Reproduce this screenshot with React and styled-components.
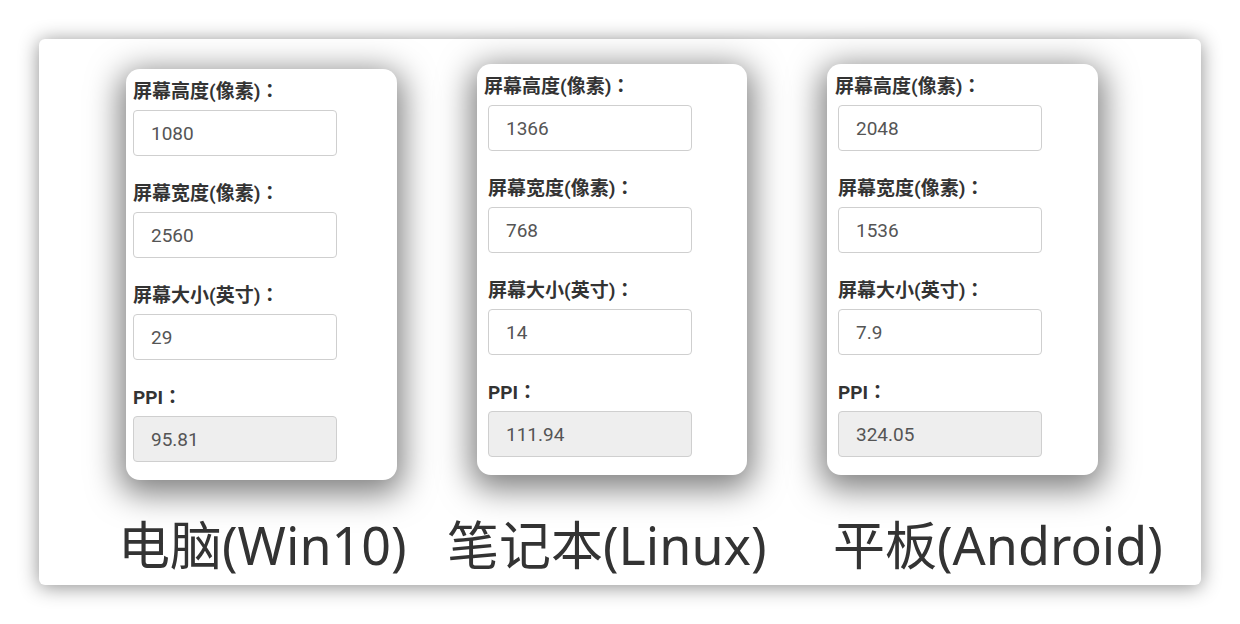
import styled, { createGlobalStyle } from "styled-components";

const GlobalStyle = createGlobalStyle`
  html, body {
    margin: 0;
    padding: 0;
    background: #ffffff;
  }
  body {
    font-family: "Roboto", "Noto Sans CJK SC", sans-serif;
  }
`;

const Page = styled.div`
  width: 1240px;
  height: 624px;
  padding: 39px 0 0 39px;
  box-sizing: border-box;
`;

const Panel = styled.div`
  width: 1162px;
  height: 546px;
  background: #fff;
  border-radius: 6px;
  box-shadow: 0 2px 20px rgba(0, 0, 0, 0.45);
  padding: 25px 0 0 87px;
  box-sizing: border-box;
`;

const CardsRow = styled.div`
  display: grid;
  grid-template-columns: 271px 270px 271px;
  column-gap: 80px;
  align-items: start;
`;

const Card = styled.div`
  margin-top: ${(p) => p.$drop || 0}px;
  height: 411px;
  box-sizing: border-box;
  background: #fff;
  border-radius: 14px;
  box-shadow: 0 8px 32px 6px rgba(0, 0, 0, 0.5);
  padding: 10px 0 0 ${(p) => p.$inset}px;
`;

const Field = styled.div`
  display: flex;
  flex-direction: column;
  align-items: flex-start;
  margin-bottom: 25px;
`;

const Label = styled.label`
  height: 22px;
  line-height: 22px;
  margin: 0 0 9px ${(p) => p.$nudge || 0}px;
  font-family: "Roboto", "Noto Sans CJK SC", sans-serif;
  font-weight: 700;
  font-size: 19px;
  color: #333;
  white-space: nowrap;
`;

const Colon = styled.span`
  font-family: "Noto Sans CJK JP", sans-serif;
`;

const Input = styled.input`
  width: 204px;
  height: 46px;
  box-sizing: border-box;
  margin: 0;
  padding: 0 0 0 17px;
  border: 1px solid #cfcfcf;
  border-radius: 4px;
  background: ${(p) => (p.readOnly ? "#eeeeee" : "#ffffff")};
  font-family: "Roboto", "Noto Sans CJK SC", sans-serif;
  font-size: 19px;
  color: #555;
  outline: none;
`;

const CaptionRow = styled.div`
  display: grid;
  grid-template-columns: 329px 386px 1fr;
  margin: 34px 0 0 -8px;
`;

const Caption = styled.div`
  font-family: "Noto Sans", "Noto Sans CJK SC", sans-serif;
  font-size: 52px;
  line-height: 62px;
  color: #333;
  white-space: nowrap;
`;

const devices = [
  { h: "1080", w: "2560", size: "29", ppi: "95.81", drop: 5, inset: 7, nudge: 0, name: "电脑(Win10)" },
  { h: "1366", w: "768", size: "14", ppi: "111.94", drop: 0, inset: 11, nudge: -4, name: "笔记本(Linux)" },
  { h: "2048", w: "1536", size: "7.9", ppi: "324.05", drop: 0, inset: 11, nudge: -3, name: "平板(Android)" },
];

const ScreenCard = ({ d }) => (
  <Card $drop={d.drop} $inset={d.inset}>
    <Field>
      <Label $nudge={d.nudge}>屏幕高度(像素)<Colon>：</Colon></Label>
      <Input defaultValue={d.h} />
    </Field>
    <Field>
      <Label>屏幕宽度(像素)<Colon>：</Colon></Label>
      <Input defaultValue={d.w} />
    </Field>
    <Field>
      <Label>屏幕大小(英寸)<Colon>：</Colon></Label>
      <Input defaultValue={d.size} />
    </Field>
    <Field>
      <Label>PPI<Colon>：</Colon></Label>
      <Input value={d.ppi} readOnly />
    </Field>
  </Card>
);

export default function App() {
  return (
    <Page>
      <GlobalStyle />
      <Panel>
        <CardsRow>
          {devices.map((d) => (
            <ScreenCard key={d.name} d={d} />
          ))}
        </CardsRow>
        <CaptionRow>
          {devices.map((d) => (
            <Caption key={d.name}>{d.name}</Caption>
          ))}
        </CaptionRow>
      </Panel>
    </Page>
  );
}
